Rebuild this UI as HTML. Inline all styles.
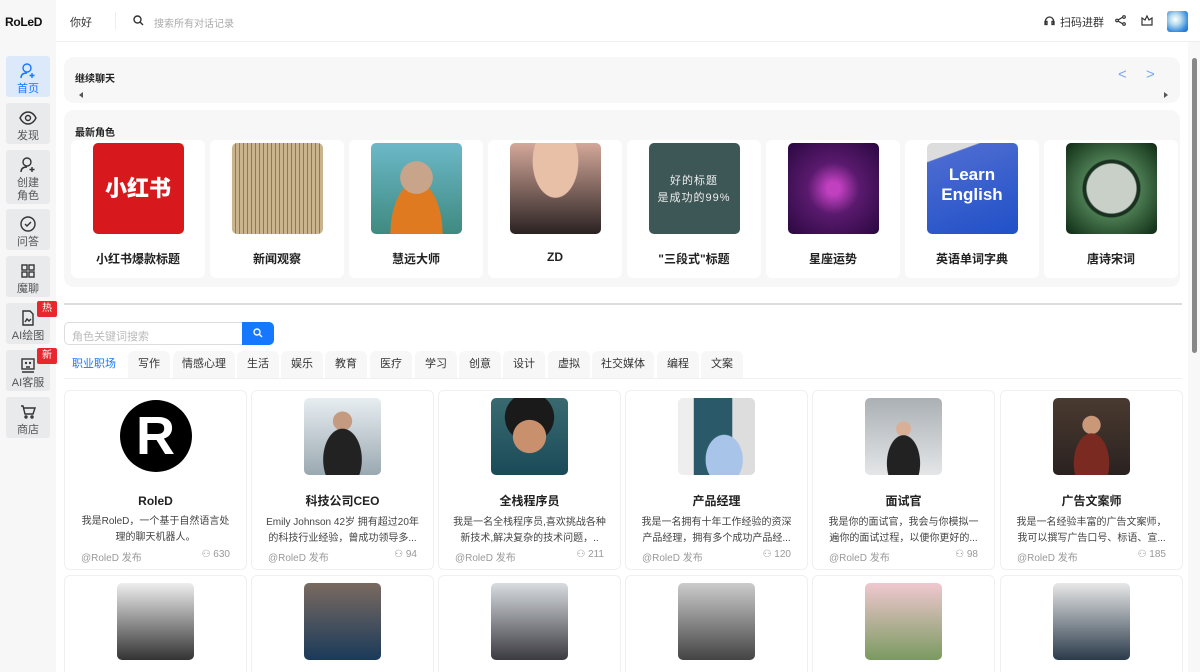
<!DOCTYPE html>
<html><head><meta charset="utf-8"><style>
*{margin:0;padding:0;box-sizing:border-box}
html,body{width:1200px;height:672px;overflow:hidden}
body{background:#fff;font-family:"Liberation Sans","Noto Sans CJK SC",sans-serif;color:#222;position:relative}
.a{position:absolute}
.side{left:0;top:0;width:56px;height:672px;background:#f7f7f8}
.nav{position:absolute;left:6px;width:44px;background:#e9eaec;border-radius:3px;text-align:center;font-size:11px;color:#555;line-height:13px}
.nav svg{display:block;margin:6px auto 3px}
.badge{position:absolute;right:-7px;top:-2px;background:#e8262d;color:#fff;font-size:10px;width:20px;height:16px;line-height:16px;border-radius:2px}
.hdr{left:56px;top:0;width:1144px;height:42px;border-bottom:1px solid #eee}
.panel{background:#f7f7f8;border-radius:10px}
.rc{position:absolute;top:140px;width:134px;height:138px;background:#fff;border-radius:6px;text-align:center}
.rc .im{width:91px;height:91px;margin:3px auto 0;border-radius:5px}
.rc .t{font-size:12px;font-weight:bold;margin-top:16px}
.tab{position:absolute;top:351px;height:27px;line-height:27px;font-size:11px;color:#333;background:#f7f7f8;border-radius:6px 6px 0 0;text-align:center}
.cc{position:absolute;width:183px;height:180px;border:1px solid #f0f0f0;border-radius:6px;background:#fff;text-align:center}
.cc.r2{height:97px;border-bottom:none;border-radius:6px 6px 0 0}
.cc .av{width:77px;height:77px;margin:7px auto 0;border-radius:5px}
.cc .n{font-size:12px;font-weight:bold;margin-top:17px}
.cc .d{font-size:10px;color:#444;line-height:16px;margin:6px 14px 0;height:32px;overflow:hidden}
.cc .f{position:absolute;left:16px;right:16px;bottom:5px;font-size:10px;color:#999;display:flex;justify-content:space-between}
</style></head><body>
<div class="a side">
<div class="a" style="left:5px;top:15px;font-weight:900;font-size:12px;color:#111;letter-spacing:-.3px">RoLeD</div>
<div class="nav" style="top:56px;height:41px;background:#dce9fb;color:#1677ff"><svg width="18" height="18" viewBox="0 0 18 18" fill="none" stroke="#1677ff" stroke-width="1.4"><circle cx="8" cy="6" r="4"/><path d="M2 16c0-4 3-5 6-5M13 11v5M10.5 13.5h5"/></svg>首页</div>
<div class="nav" style="top:103px;height:41px"><svg width="18" height="18" viewBox="0 0 18 18" fill="none" stroke="#333" stroke-width="1.4"><path d="M1 9c2-4 5-6 8-6s6 2 8 6c-2 4-5 6-8 6s-6-2-8-6z"/><circle cx="9" cy="9" r="2.5"/></svg>发现</div>
<div class="nav" style="top:150px;height:54px"><svg width="18" height="18" viewBox="0 0 18 18" fill="none" stroke="#333" stroke-width="1.4"><circle cx="8" cy="6" r="4"/><path d="M2 16c0-4 3-5 6-5M13 11v5M10.5 13.5h5"/></svg>创建<br>角色</div>
<div class="nav" style="top:209px;height:41px"><svg width="18" height="18" viewBox="0 0 18 18" fill="none" stroke="#333" stroke-width="1.4"><circle cx="9" cy="9" r="7"/><path d="M6 9l2 2 4-4"/></svg>问答</div>
<div class="nav" style="top:256px;height:41px"><svg width="18" height="18" viewBox="0 0 18 18" fill="none" stroke="#333" stroke-width="1.4"><rect x="3" y="3" width="5" height="5"/><rect x="10" y="3" width="5" height="5"/><rect x="3" y="10" width="5" height="5"/><rect x="10" y="10" width="5" height="5"/></svg>魔聊</div>
<div class="nav" style="top:303px;height:41px"><svg width="18" height="18" viewBox="0 0 18 18" fill="none" stroke="#333" stroke-width="1.4"><path d="M4 2h7l3 3v11H4z"/><path d="M6 13l2-3 2 2 2-2"/></svg>AI绘图<div class="badge">热</div></div>
<div class="nav" style="top:350px;height:41px"><svg width="18" height="18" viewBox="0 0 18 18" fill="none" stroke="#333" stroke-width="1.4"><rect x="3" y="3" width="12" height="10"/><path d="M3 16h12M7 11h4"/><circle cx="7" cy="7" r=".5"/><circle cx="11" cy="7" r=".5"/></svg>AI客服<div class="badge">新</div></div>
<div class="nav" style="top:397px;height:41px"><svg width="18" height="18" viewBox="0 0 18 18" fill="none" stroke="#333" stroke-width="1.4"><path d="M2 3h2l2 8h8l2-6H5"/><circle cx="7" cy="14" r="1"/><circle cx="13" cy="14" r="1"/></svg>商店</div>
</div>
<div class="a hdr">
<div class="a" style="left:14px;top:14px;font-size:11px;color:#333">你好</div>
<div class="a" style="left:59px;top:12px;width:1px;height:18px;background:#eee"></div>
<svg class="a" style="left:77px;top:15px" width="11" height="11" viewBox="0 0 11 11" fill="none" stroke="#333" stroke-width="1.4"><circle cx="4.5" cy="4.5" r="3.5"/><path d="M7 7l3 3"/></svg>
<div class="a" style="left:98px;top:15px;font-size:10px;color:#aaa">搜索所有对话记录</div>
<svg class="a" style="left:988px;top:15px" width="11" height="11" viewBox="0 0 11 11" fill="none" stroke="#333" stroke-width="1.3"><path d="M1.5 9V6a4 4 0 018 0v3"/><rect x="1" y="6.5" width="2" height="3"/><rect x="8" y="6.5" width="2" height="3"/></svg>
<div class="a" style="left:1004px;top:14px;font-size:11px;color:#333">扫码进群</div>
<svg class="a" style="left:1059px;top:15px" width="11" height="11" viewBox="0 0 11 11" fill="none" stroke="#333" stroke-width="1.2"><circle cx="2" cy="5.5" r="1.3"/><circle cx="9" cy="2" r="1.3"/><circle cx="9" cy="9" r="1.3"/><path d="M3 5l5-3M3 6l5 3"/></svg>
<svg class="a" style="left:1085px;top:14px" width="12" height="12" viewBox="0 0 12 12" fill="none" stroke="#333" stroke-width="1.2"><path d="M1 4l3 2 2-4 2 4 3-2v7H1z"/></svg>
<div class="a" style="left:1111px;top:11px;width:21px;height:21px;border-radius:3px;background:radial-gradient(circle at 40% 40%,#fff 0,#bde 30%,#3a8ee0 70%,#1c64c0)"></div>
</div>
<div class="a panel" style="left:64px;top:57px;width:1116px;height:46px">
<div class="a" style="left:11px;top:13px;font-size:10px;font-weight:bold">继续聊天</div>
<div class="a" style="left:1054px;top:9px;color:#7aa8f0;font-size:15px">&lt;</div>
<div class="a" style="left:1082px;top:9px;color:#7aa8f0;font-size:15px">&gt;</div>
<div class="a" style="left:12px;top:35px;width:0;height:0;border:3px solid transparent;border-right:4px solid #555"></div>
<div class="a" style="left:1100px;top:35px;width:0;height:0;border:3px solid transparent;border-left:4px solid #555"></div>
</div>
<div class="a panel" style="left:64px;top:110px;width:1116px;height:177px">
<div class="a" style="left:11px;top:14px;font-size:10px;font-weight:bold">最新角色</div>
</div>
<div class="rc" style="left:71px"><div class="im" style="background:#d7191d;color:#fff;font-size:22px;font-weight:900;line-height:91px">小红书</div><div class="t">小红书爆款标题</div></div>
<div class="rc" style="left:210px"><div class="im" style="background:repeating-linear-gradient(90deg,#c9b48e 0 3px,#8a7a60 3px 4px),#c9b48e"></div><div class="t">新闻观察</div></div>
<div class="rc" style="left:349px"><div class="im" style="background:radial-gradient(circle at 50% 38%,#c8a58a 0 22%,transparent 23%),radial-gradient(ellipse at 50% 100%,#e07a20 0 40%,transparent 41%),linear-gradient(#6cb8c8,#3f8a80)"></div><div class="t">慧远大师</div></div>
<div class="rc" style="left:488px"><div class="im" style="background:radial-gradient(ellipse at 50% 20%,#e8c0a8 0 35%,transparent 36%),linear-gradient(#d4a89a,#2a2222)"></div><div class="t">ZD</div></div>
<div class="rc" style="left:627px"><div class="im" style="background:#3d5656;color:#eee;font-size:11px;line-height:17px;padding-top:30px;letter-spacing:1px">好的标题<br>是成功的99%</div><div class="t">"三段式"标题</div></div>
<div class="rc" style="left:766px"><div class="im" style="background:radial-gradient(circle,#c040c0 0 10%,#5a1a6e 40%,#2a0840)"></div><div class="t">星座运势</div></div>
<div class="rc" style="left:905px"><div class="im" style="background:linear-gradient(160deg,#ddd 0 15%,#4a6ad0 16%,#2050c8);color:#fff;font-weight:bold;font-size:17px;line-height:20px;padding-top:22px">Learn<br>English</div><div class="t">英语单词字典</div></div>
<div class="rc" style="left:1044px"><div class="im" style="background:radial-gradient(circle,#c8d0c8 0 38%,#1a3020 40%,#1a3020 44%,#4a7a50 46%,#0e2a14)"></div><div class="t">唐诗宋词</div></div>
<div class="a" style="left:64px;top:303px;width:1118px;height:2px;background:#dcdcdc"></div>
<div class="a" style="left:64px;top:322px;width:179px;height:23px;border:1px solid #ddd;border-radius:5px 0 0 5px;font-size:11px;color:#bbb;padding:5px 7px">角色关键词搜索</div>
<div class="a" style="left:242px;top:322px;width:32px;height:23px;background:#1677ff;border-radius:0 5px 5px 0"><svg style="margin:6px 11px" width="10" height="10" viewBox="0 0 10 10" fill="none" stroke="#fff" stroke-width="1.4"><circle cx="4" cy="4" r="3"/><path d="M6.3 6.3L9 9"/></svg></div>
<div class="a" style="left:64px;top:378px;width:1118px;height:1px;background:#f0f0f0"></div>
<div class="tab" style="left:64px;width:60px;background:#fff;color:#1677ff">职业职场</div>
<div class="tab" style="left:128px;width:42px">写作</div>
<div class="tab" style="left:173px;width:62px">情感心理</div>
<div class="tab" style="left:237px;width:42px">生活</div>
<div class="tab" style="left:281px;width:42px">娱乐</div>
<div class="tab" style="left:325px;width:42px">教育</div>
<div class="tab" style="left:370px;width:42px">医疗</div>
<div class="tab" style="left:415px;width:42px">学习</div>
<div class="tab" style="left:459px;width:42px">创意</div>
<div class="tab" style="left:503px;width:42px">设计</div>
<div class="tab" style="left:548px;width:42px">虚拟</div>
<div class="tab" style="left:592px;width:62px">社交媒体</div>
<div class="tab" style="left:657px;width:42px">编程</div>
<div class="tab" style="left:701px;width:42px">文案</div>

<div class="cc" style="left:64px;top:390px"><div class="av" style="border-radius:50%;background:#000;color:#fff;font-size:54px;font-weight:900;line-height:72px;width:72px;height:72px;margin-top:9px">R</div><div class="n" style="margin-top:22px">RoleD</div><div class="d">我是RoleD，一个基于自然语言处理的聊天机器人。</div><div class="f"><span>@RoleD 发布</span><span>⚇ 630</span></div></div>
<div class="cc" style="left:251px;top:390px"><div class="av" style="background:radial-gradient(ellipse at 50% 80%,#222 0 35%,transparent 36%),radial-gradient(circle at 50% 30%,#c49a80 0 14%,transparent 15%),linear-gradient(#e8eef2,#9aa8b0)"></div><div class="n">科技公司CEO</div><div class="d">Emily Johnson 42岁 拥有超过20年的科技行业经验，曾成功领导多...</div><div class="f"><span>@RoleD 发布</span><span>⚇ 94</span></div></div>
<div class="cc" style="left:438px;top:390px"><div class="av" style="background:radial-gradient(circle at 50% 50%,#c8906c 0 30%,transparent 31%),radial-gradient(circle at 50% 25%,#1a1a1a 0 35%,transparent 36%),linear-gradient(#3a6a70,#1a4a58)"></div><div class="n">全栈程序员</div><div class="d">我是一名全栈程序员,喜欢挑战各种新技术,解决复杂的技术问题，..</div><div class="f"><span>@RoleD 发布</span><span>⚇ 211</span></div></div>
<div class="cc" style="left:625px;top:390px"><div class="av" style="background:radial-gradient(ellipse at 60% 80%,#a8c4e8 0 28%,transparent 29%),linear-gradient(90deg,#eee 0 20%,#2a5a6a 21% 70%,#ddd 71%)"></div><div class="n">产品经理</div><div class="d">我是一名拥有十年工作经验的资深产品经理，拥有多个成功产品经...</div><div class="f"><span>@RoleD 发布</span><span>⚇ 120</span></div></div>
<div class="cc" style="left:812px;top:390px"><div class="av" style="background:radial-gradient(ellipse at 50% 85%,#222 0 30%,transparent 31%),radial-gradient(circle at 50% 40%,#d8b098 0 12%,transparent 13%),linear-gradient(#aab0b4,#e4e6e8)"></div><div class="n">面试官</div><div class="d">我是你的面试官，我会与你模拟一遍你的面试过程，以便你更好的...</div><div class="f"><span>@RoleD 发布</span><span>⚇ 98</span></div></div>
<div class="cc" style="left:1000px;top:390px"><div class="av" style="background:radial-gradient(ellipse at 50% 85%,#7a2a20 0 32%,transparent 33%),radial-gradient(circle at 50% 35%,#c89878 0 14%,transparent 15%),linear-gradient(#4a3a30,#2a2220)"></div><div class="n">广告文案师</div><div class="d">我是一名经验丰富的广告文案师，我可以撰写广告口号、标语、宣...</div><div class="f"><span>@RoleD 发布</span><span>⚇ 185</span></div></div>

<div class="cc r2" style="left:64px;top:575px"><div class="av" style="background:linear-gradient(#eee,#333)"></div></div>
<div class="cc r2" style="left:251px;top:575px"><div class="av" style="background:linear-gradient(#7a6a60,#1a3a5a)"></div></div>
<div class="cc r2" style="left:438px;top:575px"><div class="av" style="background:linear-gradient(#d8dce0,#3a3a40)"></div></div>
<div class="cc r2" style="left:625px;top:575px"><div class="av" style="background:linear-gradient(#ccc,#444)"></div></div>
<div class="cc r2" style="left:812px;top:575px"><div class="av" style="background:linear-gradient(#f0c8d0,#7a9a60)"></div></div>
<div class="cc r2" style="left:1000px;top:575px"><div class="av" style="background:linear-gradient(#e8e8e8,#2a3a4a)"></div></div>

<div class="a" style="left:1188px;top:42px;width:12px;height:630px;background:#f8f8f8"></div>
<div class="a" style="left:1192px;top:58px;width:5px;height:295px;background:#888;border-radius:3px"></div>
</body></html>
